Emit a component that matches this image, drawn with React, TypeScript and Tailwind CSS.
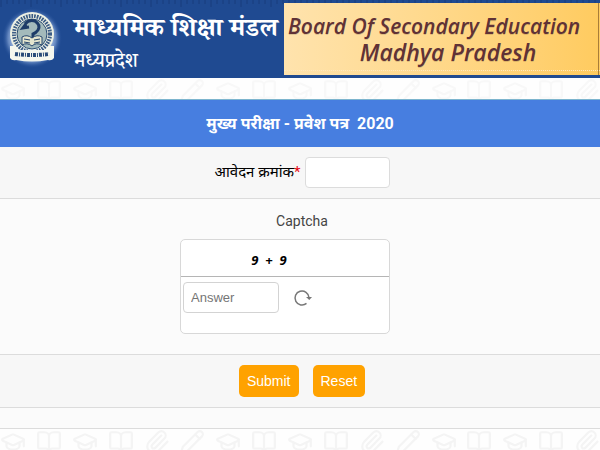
import React from 'react';
import { BookOpen, GraduationCap, Paperclip, Pencil } from 'lucide-react';

const Seal = () => (
    <svg viewBox="0 0 60 60" className="h-[60px] w-[60px] shrink-0" role="img" aria-label="Board seal">
        <defs>
            <radialGradient id="glow">
                <stop offset="0.6" stopColor="#b9cdea" />
                <stop offset="0.8" stopColor="#7f9fd2" stopOpacity="0.7" />
                <stop offset="1" stopColor="#24509b" stopOpacity="0" />
            </radialGradient>
        </defs>
        <circle cx="30" cy="30" r="30" fill="url(#glow)" />
        <circle cx="30" cy="26" r="22" fill="#eef1e4" />
        <path d="M8 38 H52 V50 Q50 53 46 52 Q30 55 14 52 Q10 53 8 50 Z" fill="#f5f7ee" />
        <circle cx="30" cy="26" r="18" fill="none" stroke="#3b5c85" strokeWidth="4" strokeDasharray="1.7 1" />
        <circle cx="30" cy="26" r="15" fill="#a3babb" stroke="#2d4f74" />
        <path d="M23 16 Q27 11 33 13 Q39 17 36 22 Q34 25 31 26 V30 M24 16 L21 20 L27 19" fill="none" stroke="#1d3c68" strokeWidth="3" />
        <path d="M20 29 Q25 26 30 30 Q35 26 40 29 V37 Q34 34 30 38 Q25 34 20 37 Z" fill="#e4e5ce" stroke="#26466e" />
        <path d="M22 31 L28 32 M22 34 L28 35 M32 32 L38 31 M32 35 L38 34" stroke="#26466e" />
        <path d="M13 42 H47 V48 H13 Z" fill="#f5f7ee" />
        <path d="M13 46 Q30 48 47 46" fill="none" stroke="#294b78" strokeWidth="4" strokeDasharray="3 1 1 1" />
    </svg>
);

const doodles = [GraduationCap, BookOpen, GraduationCap, BookOpen, Paperclip, Pencil];

const DoodleStrip = ({ className }: { className: string }) => (
    <div className={`flex justify-between overflow-hidden bg-[#fefefe] ${className}`} aria-hidden="true">
        {Array.from({ length: 17 }, (_, i) => {
            const Icon = doodles[i % doodles.length];
            return <Icon key={i} size={26} strokeWidth={2} className="shrink-0" />;
        })}
    </div>
);

const Ruler = () => (
    <svg className="absolute inset-x-0 top-0 h-2 w-full" aria-hidden="true">
        <defs>
            <pattern id="ticks" width="30" height="8" patternUnits="userSpaceOnUse">
                <path d="M1 0V7M7 0V4M13 0V4M19 0V4M25 0V4" stroke="#173c7b" />
            </pattern>
        </defs>
        <rect width="100%" height="8" fill="url(#ticks)" />
    </svg>
);

const RefreshIcon = () => (
    <svg width="20" height="18" viewBox="0 0 20 18" fill="none" stroke="#777" strokeWidth="1.5">
        <path d="M13.5 14.4 A7 7 0 1 1 16 8.5" />
        <path d="M13 8 H19 L16.3 11 Z" fill="#777" stroke="none" />
    </svg>
);

export default function App() {
    return (
        <div className="min-h-screen bg-[#fefefe] font-['Roboto','Noto_Sans',sans-serif] text-black">
            <header className="relative flex bg-[#1f4a91]">
                <Ruler />
                <div className="flex w-[284px] shrink-0 items-start gap-3 pt-2 pl-0.5 font-['Noto_Serif_Devanagari','Noto_Sans',serif] text-white">
                    <Seal />
                    <div className="pt-2 whitespace-nowrap">
                        <h1 className="text-[26px] leading-8 font-bold">माध्यमिक शिक्षा मंडल</h1>
                        <p className="pt-0.5 text-xl leading-7 font-medium">मध्यप्रदेश</p>
                    </div>
                </div>
                <div className="relative my-[3px] flex-1 bg-linear-to-r from-[#ffe3ad] via-[#ffd889] to-[#ffcb5f] pt-2.5 pl-1 text-[#603236] italic">
                    <div className="w-[300px] font-['Open_Sans',sans-serif] leading-[26px] font-semibold whitespace-nowrap text-shadow-2xs">
                        <p className="text-[21px]">Board Of Secondary Education</p>
                        <p className="pl-5 text-center text-[23px]">Madhya Pradesh</p>
                    </div>
                    <div className="absolute inset-x-0 bottom-1 border-b border-dotted border-[#ffe9bd]" />
                    <div className="absolute inset-y-0 right-0 w-0.5 border-l border-[#a87d38]" />
                </div>
            </header>

            <DoodleStrip className="h-[21px] text-[#f8f8f8]" />

            <main>
                <form onSubmit={(e) => e.preventDefault()}>
                    <h2 className="border-t border-[#7db5ce] bg-[#477ee0] text-center text-base leading-[47px] font-bold whitespace-pre text-white">
                        मुख्य परीक्षा - प्रवेश पत्र  2020
                    </h2>

                    <div className="flex items-center justify-center gap-1 border-b border-[#dcdcdc] bg-[#f7f7f7] py-2.5 pl-1">
                        <label htmlFor="application" className="text-[15px]">
                            आवेदन क्रमांक<span className="text-red-600">*</span>
                        </label>
                        <input id="application" className="h-[31px] w-[85px] rounded border border-[#dcdcdc] bg-white px-2" />
                    </div>

                    <div className="border-b border-[#dcdcdc] bg-[#fbfbfb] pt-2 pb-5">
                        <label htmlFor="answer" className="block pt-1 pl-1 text-center text-sm leading-5 text-[#444]">Captcha</label>
                        <div className="mx-auto mt-2 h-[95px] w-[210px] -translate-x-[15px] rounded-[5px] border border-[#d8d8d8] bg-white">
                            <p className="border-b border-[#b5b5b5] pt-1 pr-8 text-center font-['Open_Sans',sans-serif] text-[13px] leading-8 font-bold whitespace-pre italic">9  +  9</p>
                            <div className="flex items-center gap-3.5 px-0.5 pt-[5px]">
                                <input id="answer" placeholder="Answer" className="h-[31px] w-24 rounded border border-[#d3d3d3] bg-white px-[7px] font-['Liberation_Sans',sans-serif] text-[13px] placeholder:text-[#757575]" />
                                <button type="button" aria-label="Refresh captcha"><RefreshIcon /></button>
                            </div>
                        </div>
                    </div>

                    <div className="flex justify-center gap-3.5 border-b border-[#dcdcdc] bg-[#f7f7f7] py-2.5 pl-1 font-['Liberation_Sans',sans-serif] text-sm text-white">
                        <button type="submit" className="h-8 rounded-[5px] bg-[#ffa200] px-2">Submit</button>
                        <button type="reset" className="h-8 rounded-[5px] bg-[#ffa200] px-2">Reset</button>
                    </div>
                    <div className="h-[21px] border-b border-[#dcdcdc] bg-[#fbfbfb]" />
                </form>
            </main>

            <DoodleStrip className="h-[21px] text-[#f4f4f4]" />
        </div>
    );
}
